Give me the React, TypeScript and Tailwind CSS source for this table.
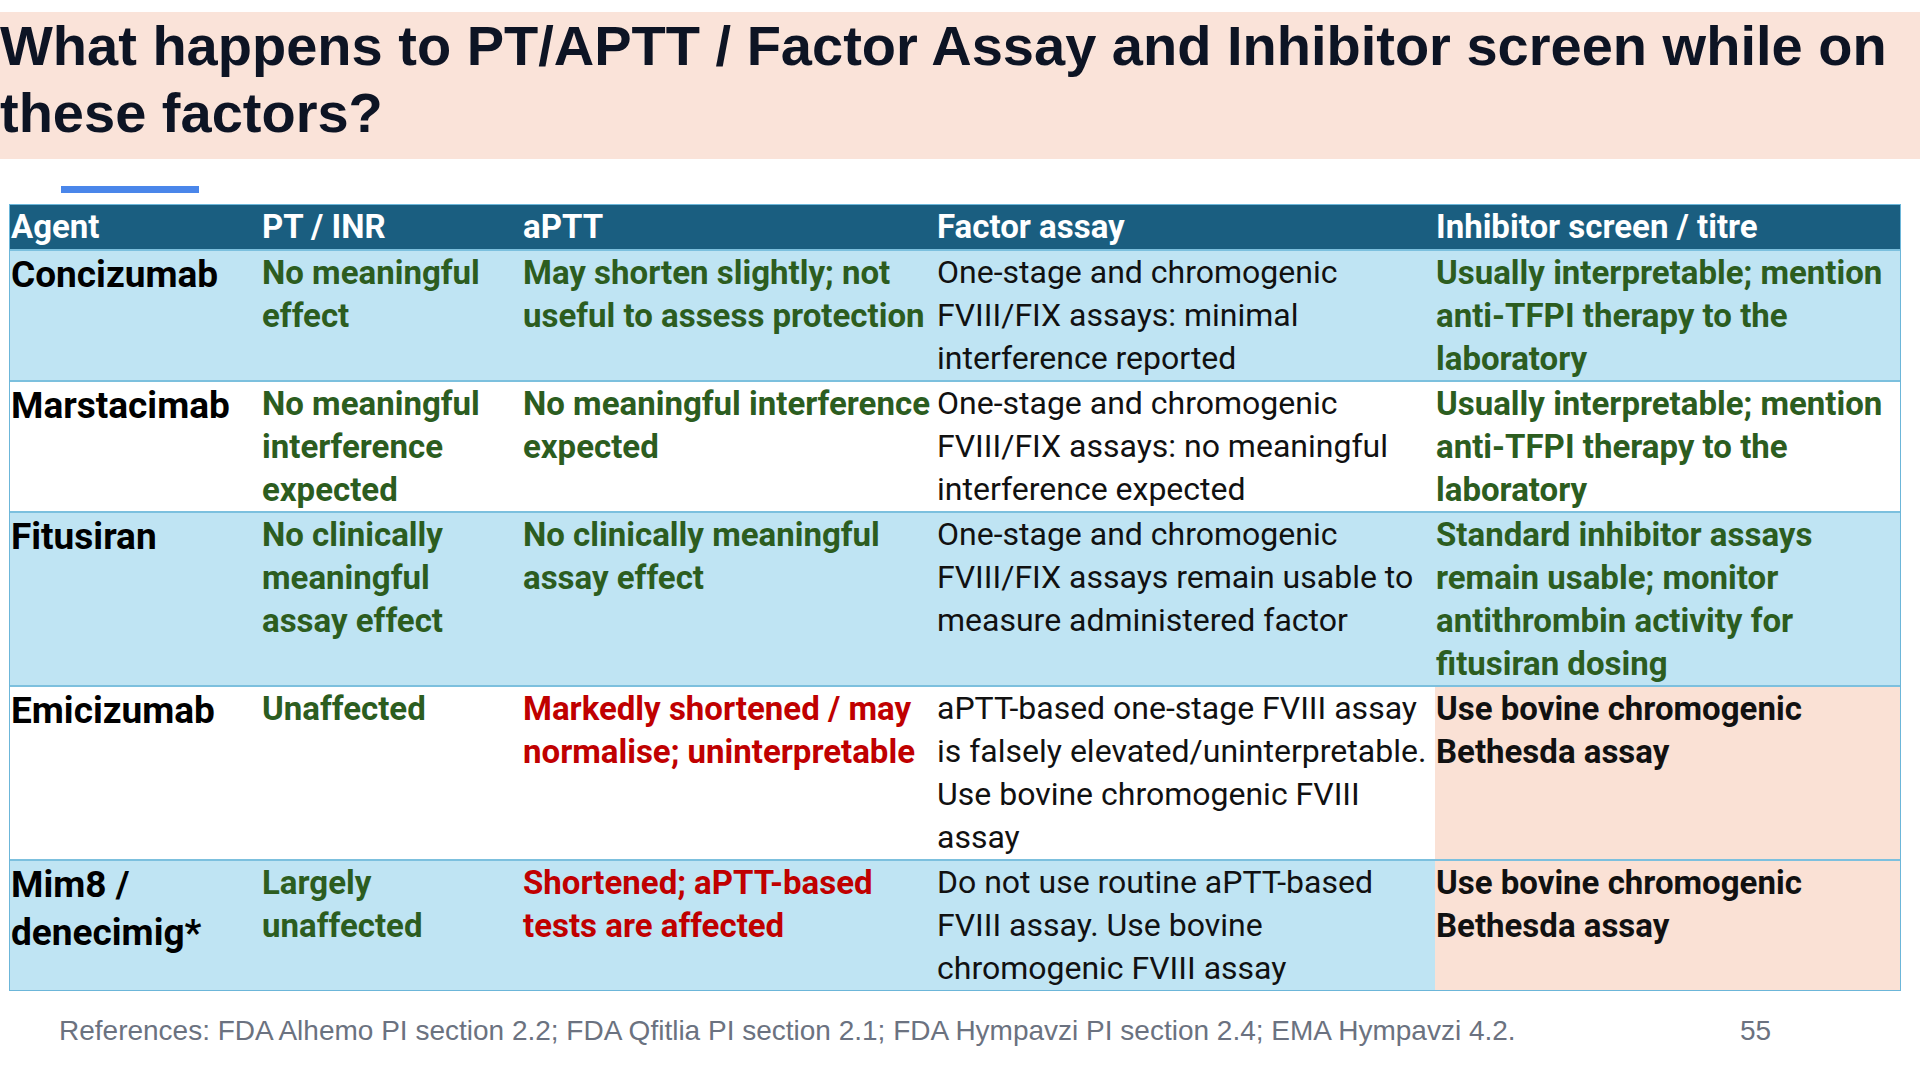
type Tone = "green" | "red" | "black" | "bold";

interface Cell {
  lines: string[];
  tone: Tone;
  peach?: boolean;
}

interface Row {
  agent: string[];
  bg: "blue" | "white";
  cells: Cell[];
}

const toneClass: Record<Tone, string> = {
  green: "font-bold text-[33px] text-[#2c5d1f]",
  red: "font-bold text-[33px] text-[#c00000]",
  black: "font-normal text-[#111111]",
  bold: "font-bold text-[33px] text-[#111111]",
};

const rows: Row[] = [
  {
    agent: ["Concizumab"],
    bg: "blue",
    cells: [
      { lines: ["No meaningful", "effect"], tone: "green" },
      { lines: ["May shorten slightly; not", "useful to assess protection"], tone: "green" },
      { lines: ["One-stage and chromogenic", "FVIII/FIX assays: minimal", "interference reported"], tone: "black" },
      { lines: ["Usually interpretable; mention", "anti-TFPI therapy to the", "laboratory"], tone: "green" },
    ],
  },
  {
    agent: ["Marstacimab"],
    bg: "white",
    cells: [
      { lines: ["No meaningful", "interference", "expected"], tone: "green" },
      { lines: ["No meaningful interference", "expected"], tone: "green" },
      { lines: ["One-stage and chromogenic", "FVIII/FIX assays: no meaningful", "interference expected"], tone: "black" },
      { lines: ["Usually interpretable; mention", "anti-TFPI therapy to the", "laboratory"], tone: "green" },
    ],
  },
  {
    agent: ["Fitusiran"],
    bg: "blue",
    cells: [
      { lines: ["No clinically", "meaningful", "assay effect"], tone: "green" },
      { lines: ["No clinically meaningful", "assay effect"], tone: "green" },
      { lines: ["One-stage and chromogenic", "FVIII/FIX assays remain usable to", "measure administered factor"], tone: "black" },
      { lines: ["Standard inhibitor assays", "remain usable; monitor", "antithrombin activity for", "fitusiran dosing"], tone: "green" },
    ],
  },
  {
    agent: ["Emicizumab"],
    bg: "white",
    cells: [
      { lines: ["Unaffected"], tone: "green" },
      { lines: ["Markedly shortened / may", "normalise; uninterpretable"], tone: "red" },
      { lines: ["aPTT-based one-stage FVIII assay", "is falsely elevated/uninterpretable.", "Use bovine chromogenic FVIII", "assay"], tone: "black" },
      { lines: ["Use bovine chromogenic", "Bethesda assay"], tone: "bold", peach: true },
    ],
  },
  {
    agent: ["Mim8 /", "denecimig*"],
    bg: "blue",
    cells: [
      { lines: ["Largely", "unaffected"], tone: "green" },
      { lines: ["Shortened; aPTT-based", "tests are affected"], tone: "red" },
      { lines: ["Do not use routine aPTT-based", "FVIII assay. Use bovine", "chromogenic FVIII assay"], tone: "black" },
      { lines: ["Use bovine chromogenic", "Bethesda assay"], tone: "bold", peach: true },
    ],
  },
];

const headers = ["Agent", "PT / INR", "aPTT", "Factor assay", "Inhibitor screen / titre"];

const Lines = ({ lines }: { lines: string[] }) => (
  <>
    {lines.map((l, i) => (
      <div key={i} className="whitespace-nowrap">
        {l}
      </div>
    ))}
  </>
);

export default function App() {
  return (
    <div className="w-[1920px] h-[1080px] bg-white overflow-hidden">
      {/* title band */}
      <div className="pt-[12px]">
        <div className="bg-[#fae3d9] pb-[13px]">
          <h1 className="font-['Liberation_Sans',Arial,sans-serif] font-bold text-[56px] leading-[67px] text-[#0d1424] whitespace-nowrap">
            What happens to PT/APTT / Factor Assay and Inhibitor screen while on
            <br />
            these factors?
          </h1>
        </div>
      </div>

      <div className="mt-[27px] ml-[61px] w-[138px] h-[7px] bg-[#4a86ea]" />

      {/* table */}
      <div className="mt-[11px] ml-[9px] w-[1892px] border border-[#6cb6d9] font-['Roboto',sans-serif] text-[32px] leading-[43px]">
        <div className="grid grid-cols-[251px_261px_414px_499px_465px] bg-[#1a5e80] text-white font-bold text-[33px] h-[44px]">
          {headers.map((h) => (
            <div key={h} className="pl-[1px] leading-[44px] whitespace-nowrap">
              {h}
            </div>
          ))}
        </div>
        {rows.map((r, i) => (
          <div
            key={i}
            className={`grid grid-cols-[251px_261px_414px_499px_465px] border-t-2 border-[#7cc0de] ${
              r.bg === "blue" ? "bg-[#bfe4f3]" : "bg-white"
            }`}
          >
            <div className="pl-[1px] font-bold text-[37px] leading-[48px] text-black">
              <Lines lines={r.agent} />
            </div>
            {r.cells.map((c, j) => (
              <div
                key={j}
                className={`pl-[1px] ${toneClass[c.tone]} ${c.peach ? "bg-[#fae1d5]" : ""}`}
              >
                <Lines lines={c.lines} />
              </div>
            ))}
          </div>
        ))}
      </div>

      {/* footer */}
      <div className="mt-[24px] flex font-['Liberation_Sans',Arial,sans-serif] text-[28px] leading-[32px] text-[#6b7280]">
        <div className="ml-[59px] w-[1681px] whitespace-nowrap">
          References: FDA Alhemo PI section 2.2; FDA Qfitlia PI section 2.1; FDA Hympavzi PI section 2.4; EMA Hympavzi 4.2.
        </div>
        <div>55</div>
      </div>
    </div>
  );
}
